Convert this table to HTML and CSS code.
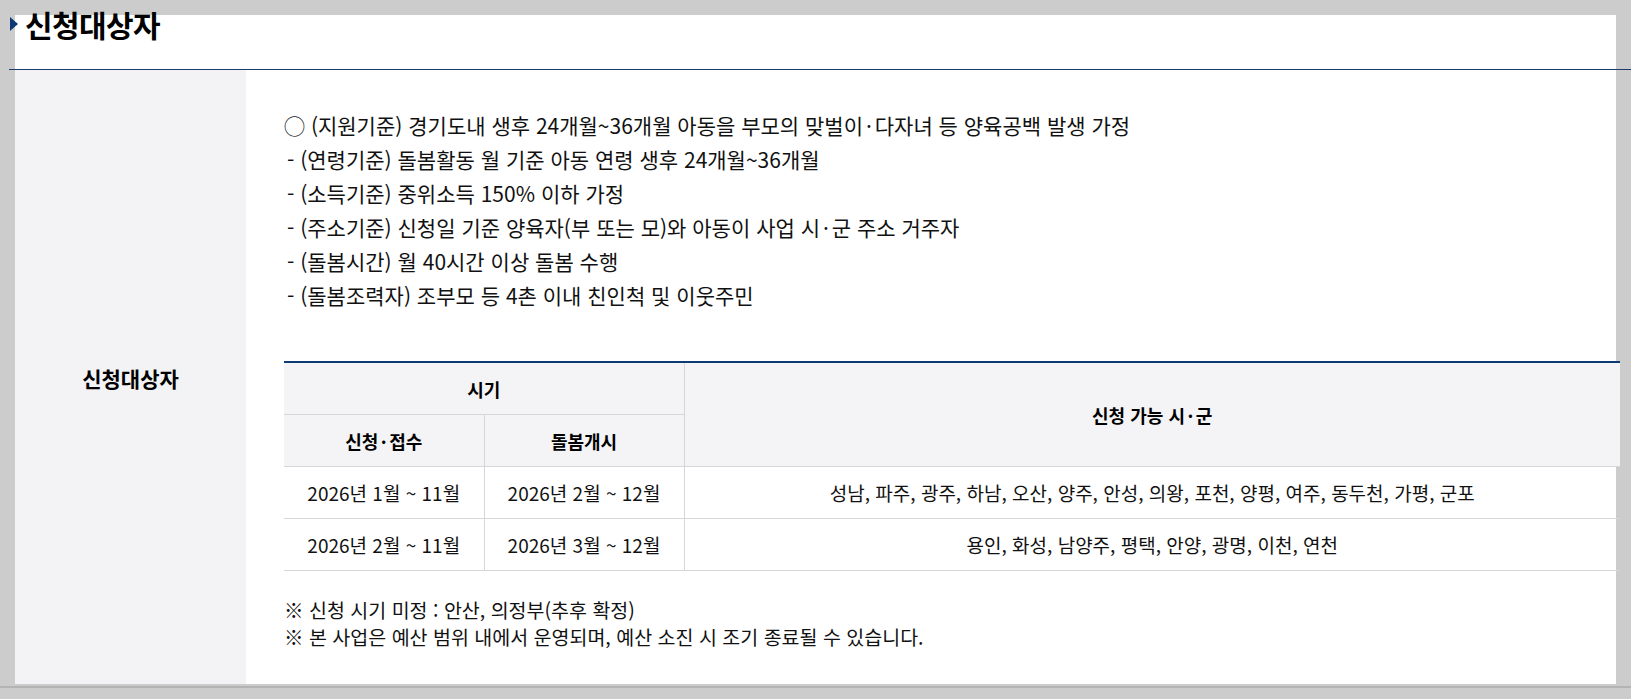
FILE: index.html
```html
<!DOCTYPE html>
<html lang="ko">
<head>
<meta charset="utf-8">
<title>신청대상자</title>
<link rel="stylesheet" href="styles.css">
</head>
<body>
<div class="page">
  <h2 class="title"><span class="tri"></span>신청대상자</h2>
  <div class="rule"></div>
  <div class="row">
    <div class="label">신청대상자</div>
    <div class="content">
      <div class="lines">
        <p class="main">◯ (지원기준) 경기도내 생후 24개월~36개월 아동을 부모의 맞벌이<span class="dot">·</span>다자녀 등 양육공백 발생 가정</p>
        <p class="sub">- (연령기준) 돌봄활동 월 기준 아동 연령 생후 24개월~36개월</p>
        <p class="sub">- (소득기준) 중위소득 150% 이하 가정</p>
        <p class="sub">- (주소기준) 신청일 기준 양육자(부 또는 모)와 아동이 사업 시<span class="dot">·</span>군 주소 거주자</p>
        <p class="sub">- (돌봄시간) 월 40시간 이상 돌봄 수행</p>
        <p class="sub">- (돌봄조력자) 조부모 등 4촌 이내 친인척 및 이웃주민</p>
      </div>
      <table class="tbl">
        <colgroup><col class="c1"><col class="c2"><col class="c3"></colgroup>
        <thead>
          <tr><th colspan="2">시기</th><th rowspan="2">신청 가능 시<span class="dot">·</span>군</th></tr>
          <tr><th>신청<span class="dot">·</span>접수</th><th>돌봄개시</th></tr>
        </thead>
        <tbody>
          <tr><td>2026년 1월 ~ 11월</td><td>2026년 2월 ~ 12월</td><td>성남, 파주, 광주, 하남, 오산, 양주, 안성, 의왕, 포천, 양평, 여주, 동두천, 가평, 군포</td></tr>
          <tr><td>2026년 2월 ~ 11월</td><td>2026년 3월 ~ 12월</td><td>용인, 화성, 남양주, 평택, 안양, 광명, 이천, 연천</td></tr>
        </tbody>
      </table>
      <div class="notes">
        <p>※ 신청 시기 미정 : 안산, 의정부(추후 확정)</p>
        <p>※ 본 사업은 예산 범위 내에서 운영되며, 예산 소진 시 조기 종료될 수 있습니다.</p>
      </div>
    </div>
  </div>
</div>
<div class="bottomline"></div>
</body>
</html>
```

FILE: styles.css
```css
html, body {
  margin: 0;
  padding: 0;
}
body {
  background: #cccccc;
  font-family: "Noto Sans CJK KR", "Noto Sans", sans-serif;
  color: #111;
  overflow: hidden;
}
p { margin: 0; }

.page {
  display: flow-root;
  margin: 15px 0 0 15px;
  width: 1601px;
  height: 669px;
  background: #ffffff;
}

.title {
  display: flex;
  align-items: center;
  margin: -13px 0 0 -5px;
  height: 44px;
  font-size: 30px;
  font-weight: 700;
  letter-spacing: -0.6px;
  color: #000;
  line-height: 44px;
}
.tri {
  width: 0;
  height: 0;
  border-top: 7.5px solid transparent;
  border-bottom: 7.5px solid transparent;
  border-left: 8px solid #0e3a72;
  margin-right: 7px;
}

.rule {
  height: 1px;
  background: #1c3c6c;
  margin: 23px -15px 0 -6px;
}

.row {
  display: flex;
  height: 614px;
}
.label {
  width: 231px;
  flex: none;
  background: #f3f3f5;
  display: flex;
  align-items: center;
  justify-content: center;
  font-size: 21px;
  font-weight: 700;
  color: #000;
  padding-top: 2px;
  box-sizing: border-box;
}
.content {
  flex: 1;
  padding: 38px 0 0 38px;
}

.dot { margin: 0 0.14em; }

.lines {
  font-size: 21px;
  line-height: 34px;
  color: #111;
}
.sub { padding-left: 3px; }

.tbl {
  margin-top: 49px;
  width: 1336px;
  border-collapse: collapse;
  border-top: 2px solid #0b3a74;
  font-size: 19px;
  table-layout: fixed;
}
.c1, .c2 { width: 200px; }
.tbl th {
  background: #f4f4f6;
  font-weight: 700;
  font-size: 18px;
  color: #000;
  height: 51px;
  padding: 0;
  border: 1px solid #d6d6d8;
  border-top: none;
}
.tbl td {
  height: 51px;
  padding: 0;
  text-align: center;
  border: 1px solid #d6d6d8;
  color: #111;
}
.tbl tr > :first-child { border-left: none; }
.tbl tr > :last-child { border-right: none; }
.tbl thead tr:first-child th:first-child { border-right: 1px solid #d6d6d8; }

.notes {
  margin-top: 25px;
  font-size: 19.5px;
  line-height: 27px;
  color: #111;
}

.bottomline {
  height: 2px;
  background: #b4b4b4;
  margin-top: 2px;
}
```
